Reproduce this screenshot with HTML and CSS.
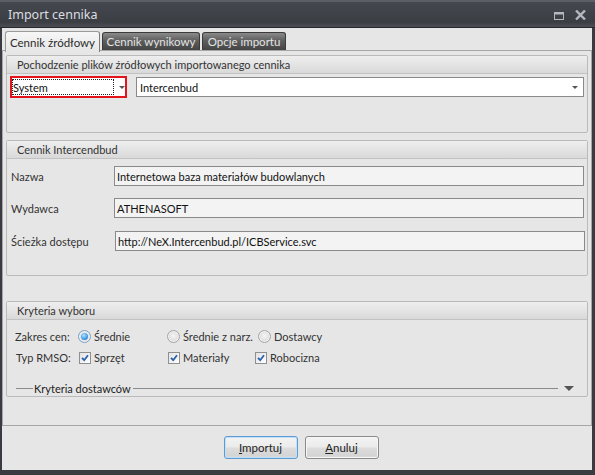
FILE: index.html
```html
<!DOCTYPE html>
<html lang="pl">
<head>
<meta charset="utf-8">
<title>Import cennika</title>
<link rel="stylesheet" href="styles.css">
</head>
<body>
<div class="window">
  <div class="titlebar">
    <span class="title">Import cennika</span>
    <div class="tb-btns">
      <svg class="tb-max" width="10" height="8" viewBox="0 0 10 8"><rect x="0.5" y="0.5" width="9" height="7" fill="none" stroke="#b4b8c0"/><rect x="0" y="0" width="10" height="2.5" fill="#b4b8c0"/></svg>
      <svg class="tb-close" width="11" height="10" viewBox="0 0 11 10"><path d="M1 0.5 L10 9.5 M10 0.5 L1 9.5" stroke="#b4b8c0" stroke-width="2.4"/></svg>
    </div>
  </div>
  <div class="body">
    <div class="tabs">
      <div class="tab active t1">Cennik źródłowy</div>
      <div class="tab t2">Cennik wynikowy</div>
      <div class="tab t3">Opcje importu</div>
    </div>
    <div class="panel">
      <div class="scroll">
        <section class="group g1">
          <div class="ghead">Pochodzenie plików źródłowych importowanego cennika</div>
          <div class="gbody combos">
            <div class="combo-sys">
              <span class="focus">System</span>
              <span class="arrow"></span>
            </div>
            <div class="combo">
              <span class="ctext">Intercenbud</span>
              <span class="arrow"></span>
            </div>
          </div>
        </section>
        <section class="group g2">
          <div class="ghead">Cennik Intercendbud</div>
          <div class="gbody fields">
            <div class="frow"><span class="flabel">Nazwa</span><span class="input">Internetowa baza materiałów budowlanych</span></div>
            <div class="frow r2"><span class="flabel">Wydawca</span><span class="input">ATHENASOFT</span></div>
            <div class="frow r3"><span class="flabel">Ścieżka dostępu</span><span class="input wide">http://NeX.Intercenbud.pl/ICBService.svc</span></div>
          </div>
        </section>
        <section class="group g3">
          <div class="ghead">Kryteria wyboru</div>
          <div class="gbody opts">
            <div class="orow orow1">
              <span class="olabel">Zakres cen:</span>
              <span class="opt"><span class="radio on"></span>Średnie</span>
              <span class="opt"><span class="radio"></span>Średnie z narz.</span>
              <span class="opt"><span class="radio"></span>Dostawcy</span>
            </div>
            <div class="orow orow2">
              <span class="olabel">Typ RMSO:</span>
              <span class="opt"><span class="check"><svg width="8" height="8" viewBox="0 0 8 8"><path d="M1 3.8 L3.2 6.2 L7 1.2" fill="none" stroke="#2a5fae" stroke-width="1.8"/></svg></span>Sprzęt</span>
              <span class="opt"><span class="check"><svg width="8" height="8" viewBox="0 0 8 8"><path d="M1 3.8 L3.2 6.2 L7 1.2" fill="none" stroke="#2a5fae" stroke-width="1.8"/></svg></span>Materiały</span>
              <span class="opt"><span class="check"><svg width="8" height="8" viewBox="0 0 8 8"><path d="M1 3.8 L3.2 6.2 L7 1.2" fill="none" stroke="#2a5fae" stroke-width="1.8"/></svg></span>Robocizna</span>
            </div>
            <div class="krow">
              <span class="kline short"></span>
              <span class="ktext">Kryteria dostawców</span>
              <span class="kline long"></span>
              <span class="karrow"></span>
            </div>
          </div>
        </section>
      </div>
    </div>
    <div class="buttons">
      <button class="btn default"><u>I</u>mportuj</button>
      <button class="btn"><u>A</u>nuluj</button>
    </div>
  </div>
</div>
</body>
</html>
```
FILE: styles.css
```css
html, body {
  margin: 0;
  padding: 0;
  background: #3a3c41;
}
body {
  font-family: "Lato", "Noto Sans", sans-serif;
  font-size: 11px;
  color: #2a2a2a;
}
.window {
  width: 595px;
  height: 475px;
  background: #393b40;
  display: flex;
  flex-direction: column;
  box-sizing: border-box;
}
.titlebar {
  height: 28px;
  box-sizing: border-box;
  border-top: 2px solid #5c5f66;
  border-bottom: 1px solid #26272a;
  background: linear-gradient(#45484e 0%, #3b3e43 80%, #4b4e54 100%);
  display: flex;
  align-items: center;
  justify-content: space-between;
  padding: 0 9px 0 8px;
}
.title {
  color: #dcdde0;
  font-family: "Noto Sans", sans-serif;
  font-size: 12.5px;
}
.tb-btns {
  display: flex;
  align-items: center;
  gap: 11px;
  margin-top: 1px;
}
.tb-max { margin-top: 1px; }
.body {
  flex: 1;
  margin: 0 3px 5px 2px;
  background: #e6e6e6;
  display: flex;
  flex-direction: column;
}
.tabs {
  display: flex;
  align-items: flex-end;
  gap: 2px;
  padding: 3px 0 0 3px;
  height: 19px;
}
.tab {
  height: 18px;
  box-sizing: border-box;
  border: 1px solid #3b3b3b;
  border-bottom: none;
  border-radius: 3px 3px 0 0;
  background: linear-gradient(#8a8a8a 0%, #5e5e5e 45%, #444 100%);
  color: #e4e4e4;
  display: flex;
  align-items: center;
  justify-content: center;
  white-space: nowrap;
  font-size: 11.5px;
}
.tab.active {
  height: 21px;
  margin-bottom: -2px;
  border-color: #9a9a9a;
  border-right-color: #7a7a7a;
  background: linear-gradient(#f7f7f7 0%, #e6e6e6 100%);
  color: #2a2a2a;
  position: relative;
  z-index: 2;
}
.t1 { width: 95px; }
.t2 { width: 98px; }
.t3 { width: 84px; }
.panel {
  height: 376px;
  box-sizing: border-box;
  border: 1px solid #a6a6a6;
  position: relative;
  z-index: 1;
}
.scroll {
  height: 347px;
  overflow: hidden;
  padding: 4px 3px 0 3px;
  box-sizing: border-box;
}
.group {
  border: 1px solid #bababa;
  border-radius: 2px;
  background: #e6e6e6;
}
.g2 { margin-top: 7px; }
.g3 { margin-top: 25px; }
.ghead {
  height: 17px;
  border-bottom: 1px solid #c2c2c2;
  background: linear-gradient(#eeeeee 0%, #e4e4e4 50%, #d9d9d9 100%);
  padding-left: 10px;
  display: flex;
  align-items: center;
  color: #333;
  white-space: nowrap;
}
.combos {
  display: flex;
  align-items: flex-start;
  padding: 2px 3px 34px 3px;
  gap: 9px;
}
.combo-sys {
  width: 117px;
  height: 22px;
  box-sizing: border-box;
  border: 2px solid #e3141b;
  background: #fff;
  display: flex;
  align-items: center;
}
.combo-sys .focus {
  width: 103px;
  height: 16px;
  box-sizing: border-box;
  border: 1px dotted #222;
  display: flex;
  align-items: center;
  padding-left: 0;
  color: #111;
}
.combo-sys .arrow {
  margin-left: 5px;
}
.arrow {
  width: 0;
  height: 0;
  border-left: 3px solid transparent;
  border-right: 3px solid transparent;
  border-top: 3px solid #555;
}
.combo {
  flex: 1;
  height: 20px;
  margin-top: 1px;
  box-sizing: border-box;
  border: 1px solid #8a8a8a;
  background: #fff;
  display: flex;
  align-items: center;
  justify-content: space-between;
  padding: 0 5px 0 3px;
  color: #111;
}
.fields {
  padding: 7px 3px 24px 4px;
  display: flex;
  flex-direction: column;
}
.frow {
  display: flex;
  align-items: center;
  height: 20px;
}
.r2 { margin-top: 12px; }
.r3 { margin-top: 13px; }
.flabel {
  width: 103px;
  color: #333;
  white-space: nowrap;
}
.input {
  flex: 1;
  height: 20px;
  box-sizing: border-box;
  border: 1px solid #8a8a8a;
  background: #f3f3f3;
  display: flex;
  align-items: center;
  padding-left: 2px;
  color: #111;
  white-space: nowrap;
}
.input.wide { margin-left: 1px; margin-right: -1px; }
.opts {
  padding: 6px 13px 0 8px;
}
.orow {
  display: flex;
  align-items: center;
  height: 21px;
  white-space: nowrap;
}
.olabel { color: #333; }
.orow1 .olabel { width: 63px; }
.orow2 .olabel { width: 63px; padding-left: 1px; box-sizing: border-box; }
.opt {
  display: flex;
  align-items: center;
  gap: 3px;
  color: #333;
  white-space: nowrap;
}
.orow1 .opt:nth-child(2) { width: 89px; }
.orow1 .opt:nth-child(3) { width: 91px; }
.orow2 .opt:nth-child(2) { width: 89px; padding-left: 1px; box-sizing: border-box; }
.orow2 .opt:nth-child(3) { width: 88px; padding-left: 1px; box-sizing: border-box; }
.radio {
  width: 13px;
  height: 13px;
  flex: none;
  box-sizing: border-box;
  border-radius: 50%;
  border: 1px solid #a5a5a5;
  background: radial-gradient(circle at 50% 45%, #f6f6f6 0%, #e0e0e0 55%, #cfcfcf 100%);
  box-shadow: inset 0 0 0 1px #f2f2f2;
  position: relative;
}
.radio.on {
  border-color: #7aa0c8;
}
.radio.on::after {
  content: "";
  position: absolute;
  left: 2px;
  top: 2px;
  width: 7px;
  height: 7px;
  border-radius: 50%;
  background: radial-gradient(circle at 40% 35%, #b9e4ff 0%, #4aa6ec 50%, #1f6fc0 100%);
}
.check {
  width: 12px;
  height: 12px;
  flex: none;
  box-sizing: border-box;
  border: 1px solid #8e8f8f;
  background: linear-gradient(135deg, #e2e2e2 0%, #ffffff 100%);
  display: flex;
  align-items: center;
  justify-content: center;
}
.check svg { display: block; }
.krow {
  display: flex;
  align-items: center;
  height: 16px;
  margin-top: 12px;
  margin-left: 1px;
}
.kline {
  height: 1px;
  background: #8a8a8a;
}
.kline.short { width: 17px; }
.kline.long { flex: 1; }
.ktext {
  color: #222;
  padding: 0 2px 0 1px;
  white-space: nowrap;
}
.karrow {
  width: 0;
  height: 0;
  margin-left: 6px;
  border-left: 5px solid transparent;
  border-right: 5px solid transparent;
  border-top: 5px solid #555;
}
.buttons {
  display: flex;
  justify-content: center;
  gap: 7px;
  padding: 10px 0 0 8px;
}
.btn {
  width: 74px;
  height: 23px;
  box-sizing: border-box;
  border: 1px solid #8a8a8a;
  border-radius: 3px;
  background: linear-gradient(#f3f3f3 0%, #ececec 45%, #dcdcdc 55%, #d4d4d4 90%, #e0e0e0 100%);
  box-shadow: inset 0 0 0 1px #f6f6f6;
  font-family: "Lato", "Noto Sans", sans-serif;
  font-size: 11.5px;
  color: #222;
  padding: 0;
}
.btn.default {
  border-color: #5f9ad2;
  box-shadow: inset 0 0 0 1px #bfe0fb;
}
.btn u { text-decoration: underline; }
```
